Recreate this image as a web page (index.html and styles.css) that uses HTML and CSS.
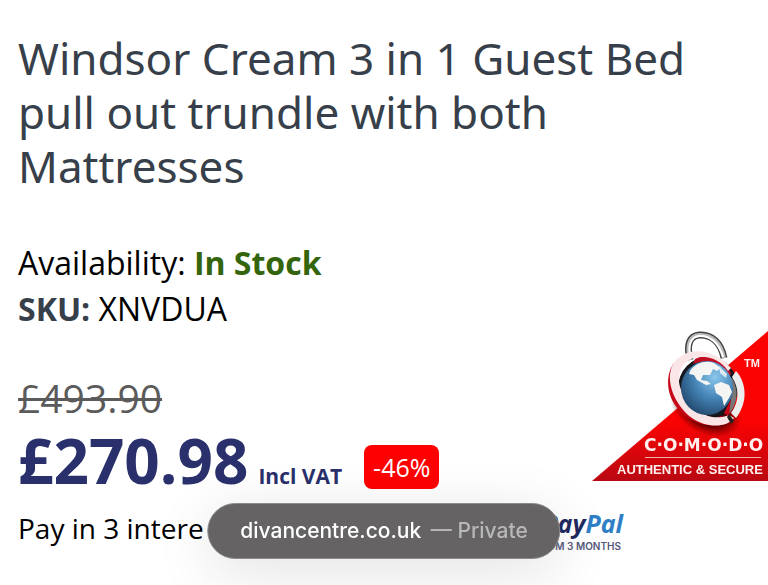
FILE: index.html
```html
<!doctype html>
<html lang="en">
  <head>
    <meta charset="utf-8">
    <meta name="viewport" content="width=device-width, initial-scale=1">
    <title>Windsor Cream 3 in 1 Guest Bed</title>
    <link rel="stylesheet" href="styles.css">
  </head>

  <body>

    <main class="product">
      <h1 class="product-title">Windsor Cream 3 in 1 Guest Bed pull out trundle with both Mattresses</h1>

      <div class="product-meta">
        <div>Availability: <strong class="in-stock">In Stock</strong></div>
        <div><strong class="sku-label">SKU:</strong> XNVDUA</div>
      </div>

      <div class="product-price">
        <del class="price-old">£493.90</del>
        <div class="price-row">
          <div class="price-new">£270.98 <small>Incl VAT</small></div>
          <span class="price-badge">-46%</span>
        </div>
      </div>

      <div class="finance">
        <span>Pay in 3 intere</span>
        <svg class="paypal" width="104" height="40" viewBox="0 0 104 40" role="img" aria-label="PayPal">
          <text class="paypal-name" x="103" y="20" text-anchor="end"><tspan fill="#20285f">Pay</tspan><tspan fill="#2f7fc6">Pal</tspan></text>
          <text class="paypal-term" x="101" y="37" text-anchor="end">FROM 3 MONTHS</text>
        </svg>
      </div>
    </main>

    <!-- corner trust logo -->
    <a class="trust-logo" href="#">
      <svg width="176" height="150" viewBox="0 0 176 150" role="img" aria-label="Comodo authentic and secure">
        <defs>
          <linearGradient id="red" x1="0" y1="0" x2="0" y2="1">
            <stop offset="0.6" stop-color="#fb0303"/>
            <stop offset="1" stop-color="#b90812"/>
          </linearGradient>
          <radialGradient id="sea" cx="0.65" cy="0.3" r="0.75">
            <stop offset="0" stop-color="#8cc8ec"/>
            <stop offset="0.5" stop-color="#4787b9"/>
            <stop offset="1" stop-color="#234a70"/>
          </radialGradient>
          <radialGradient id="shade">
            <stop offset="0.6" stop-color="#300" stop-opacity="0.8"/>
            <stop offset="1" stop-color="#600" stop-opacity="0"/>
          </radialGradient>
        </defs>
        <path d="M0 150L176 0V150Z" fill="url(#red)"/>
        <ellipse cx="114" cy="78" rx="38" ry="25" fill="url(#shade)" transform="rotate(28 114 78)"/>
        <!-- shackle -->
        <path d="M98 29C94 13 98 5 107 4C120 3 129 12 132 27" fill="none" stroke="#444" stroke-width="7"/>
        <path d="M98 29C94 13 98 5 107 4C120 3 129 12 132 27" fill="none" stroke="#bbb" stroke-width="4"/>
        <path d="M99 28C95 14 99 6 107 5C118 4 127 12 131 26" fill="none" stroke="#fff" stroke-width="2"/>
        <!-- ring -->
        <path d="M82 32C73 44 74 65 87 79C98 91 115 97 130 94L137 88L92 72Z" fill="#c50918"/>
        <ellipse cx="116" cy="57" rx="30" ry="31" fill="#16171d"/>
        <path d="M103 28C118 21 133 30 139 42L136 50C130 35 117 27 101 33Z" fill="#c00c21"/>
        <path d="M139 37C124 19 98 14 84 29C70 45 82 74 100 87C114 97 135 97 142 87L137 84C127 88 113 88 101 75C84 60 82 39 97 29C109 22 128 27 136 40Z" fill="#fbe6e7"/>
        <path d="M144 40C155 52 156 72 144 87L139 82C148 70 147 57 140 46Z" fill="#eceeee"/>
        <path d="M140 47C147 59 146 71 138 82L134 79C140 70 142 60 137 49Z" fill="#777"/>
        <path d="M139 68L132 82L137 85Z" fill="#c50918"/>
        <path d="M137 83L142 90L139 93L135 86Z" fill="#222"/>
        <!-- globe -->
        <ellipse cx="115" cy="57" rx="26" ry="27" fill="url(#sea)"/>
        <path d="M98 40C103 32 114 29 122 32L129 37L125 40L121 38L118 44L111 44L109 49L115 50L119 53L114 54L105 49L102 44L97 43Z" fill="#f5f5f3"/>
        <path d="M127 35L135 43L134 47L128 42Z" fill="#dceaf0"/>
        <path d="M122 54L129 51L137 54L140 61L137 67L132 75L130 66L124 62Z" fill="#f5f5f3"/>
        <text class="logo-tm" x="152" y="36">TM</text>
        <text class="logo-name" x="52" y="120">C·O·M·O·D·O</text>
        <path d="M53 126.5H169" stroke="#f4b1ae"/>
        <text class="logo-tagline" x="25" y="143">AUTHENTIC &amp; SECURE</text>
      </svg>
    </a>

    <!-- collapsed address bar -->
    <button class="address-bar" type="button">divancentre.co.uk <span>— Private</span></button>

  </body>
</html>
```
FILE: styles.css
```css
body {
  margin: 0;
  background-color: #fff;
  color: #000;
  font-family: "Open Sans", "Noto Sans", sans-serif;
}
.product {
  padding: 31px 18px;
}
.product-title {
  margin: 0 0 47px;
  color: #373f4a;
  font-family: "Noto Sans", sans-serif;
  font-size: 44px;
  font-weight: 400;
  line-height: 54px;
}
.product-meta {
  margin-bottom: 43px;
  font-size: 32px;
  line-height: 46px;
}
.in-stock {
  color: #34650c;
}
.sku-label {
  color: #373f4a;
}
/* prices */
.price-old {
  display: block;
  width: max-content;
  margin-bottom: 7px;
  color: #5b5b5b;
  font-size: 39px;
  line-height: 46px;
  text-decoration-thickness: 3px;
}
.price-row {
  display: flex;
  align-items: flex-end;
  gap: 22px;
}
.price-new {
  display: flex;
  align-items: baseline;
  gap: 10px;
  color: #29306b;
  font-size: 62px;
  font-weight: 700;
  line-height: 64px;
}
.price-new small {
  font-size: 21px;
  line-height: 28px;
}
.price-badge {
  margin-bottom: 3px;
  padding: 0 9px;
  border-radius: 8px;
  background-color: #f00;
  color: #fff;
  font-size: 25px;
  line-height: 44px;
}
.finance {
  display: flex;
  justify-content: space-between;
  max-width: 606px;
  margin-top: 17px;
  font-size: 28px;
  line-height: 38px;
  white-space: nowrap;
}
.paypal {
  flex: none;
  margin-top: 4px;
}
.paypal-name {
  font: italic 700 25px "Open Sans", sans-serif;
}
.paypal-term {
  fill: #55597a;
  font: 600 10px Inter, sans-serif;
}
/* trust logo */
.trust-logo {
  position: fixed;
  right: 0;
  bottom: 104px;
}
.trust-logo svg {
  display: block;
}
.trust-logo text {
  fill: #fff0ee;
  font-family: "Liberation Sans", sans-serif;
  font-weight: 700;
}
.trust-logo .logo-tm {
  font-size: 11px;
}
.trust-logo .logo-name {
  font-family: "DejaVu Sans", sans-serif;
  font-size: 17px;
}
.trust-logo .logo-tagline {
  font-size: 13px;
}
/* address bar */
.address-bar {
  position: fixed;
  bottom: 26px;
  left: 50%;
  padding: 0 32px;
  border: 1px solid #8b8b8b;
  border-radius: 28px;
  background-color: #656364;
  box-shadow: 0 12px 60px rgba(0, 0, 0, 0.12);
  color: #fff;
  font: 500 21px/54px Inter, sans-serif;
  white-space: nowrap;
  transform: translateX(-50%);
}
.address-bar span {
  margin-left: 4px;
  color: #b9b8b9;
}
```
